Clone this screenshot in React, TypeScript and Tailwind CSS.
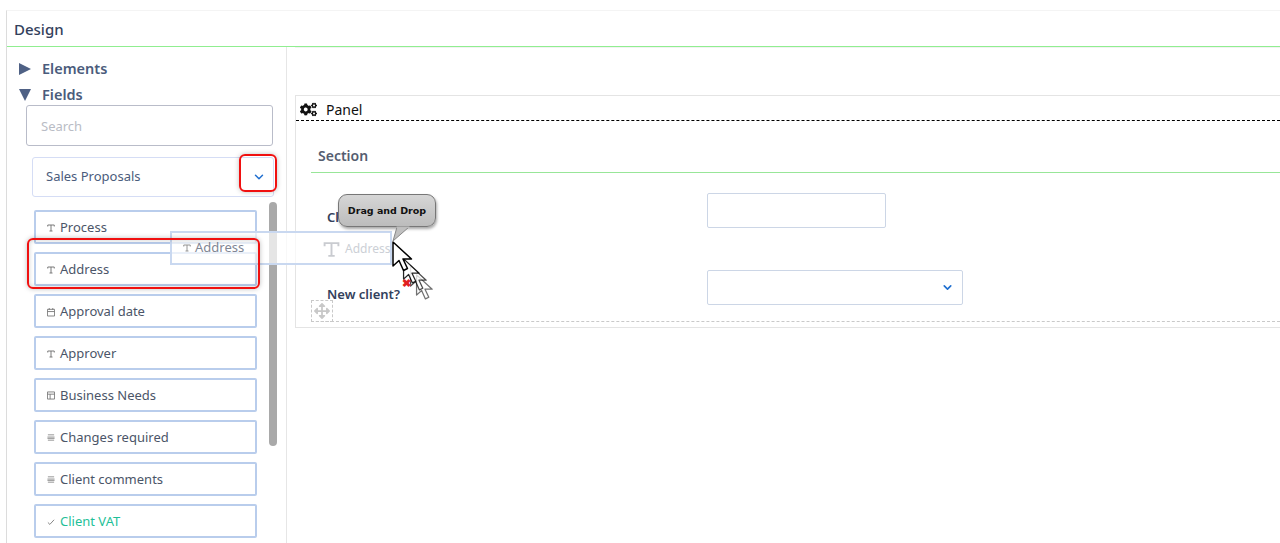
import React from "react";
import { FaCogs, FaArrowsAlt } from "react-icons/fa";
import { ChevronDown } from "lucide-react";

const TIcon = ({ size = 8, color = "#6b6b6b" }: { size?: number; color?: string }) => (
  <svg width={size} height={size} viewBox="0 0 16 16" className="shrink-0">
    <path d="M1.5 5V2h13v3M8 2v12M5 14h6" fill="none" stroke={color} strokeWidth="1.8" />
  </svg>
);
const CalIcon = () => (
  <svg width="8" height="10" viewBox="0 0 9 10" className="shrink-0">
    <path d="M.5 2h8v7.5h-8zM.5 4.5h8M2.5.5v2M6.5.5v2" fill="none" stroke="#777" strokeWidth="1" />
  </svg>
);
const TableIcon = () => (
  <svg width="8" height="9" viewBox="0 0 9 9" className="shrink-0">
    <path d="M.5.5h8v8h-8zM.5 3h8M3.5 3v5.5" fill="none" stroke="#777" strokeWidth="1" />
  </svg>
);
const LinesIcon = () => (
  <svg width="8" height="7" viewBox="0 0 9 7" className="shrink-0">
    <path d="M1 .5h7M.5 3h8M.5 4.5h8M1 6.5h7" fill="none" stroke="#888" strokeWidth="1" />
  </svg>
);
const CheckIcon = () => (
  <svg width="8" height="8" viewBox="0 0 9 8" className="shrink-0">
    <path d="M1 4.5l2.2 2.2L8 1.5" fill="none" stroke="#777" strokeWidth="1" />
  </svg>
);

const fields: { label: string; icon: React.ReactNode; green?: boolean }[] = [
  { label: "Process", icon: <TIcon /> },
  { label: "Address", icon: <TIcon /> },
  { label: "Approval date", icon: <CalIcon /> },
  { label: "Approver", icon: <TIcon /> },
  { label: "Business Needs", icon: <TableIcon /> },
  { label: "Changes required", icon: <LinesIcon /> },
  { label: "Client comments", icon: <LinesIcon /> },
  { label: "Client VAT", icon: <CheckIcon />, green: true },
];

const Cursor = ({ opacity = 1, className = "" }: { opacity?: number; className?: string }) => (
  <svg width="22" height="32" viewBox="0 0 22 32" className={className} style={{ opacity }}>
    <path d="M1 1v24l6-5.5 4.5 10 4-2-4.5-9.5h8.5z" fill="#fff" stroke="#000" strokeWidth="1.5" strokeLinejoin="round" />
  </svg>
);

export default function App() {
  return (
    <div className="relative h-[543px] w-[1280px] overflow-hidden bg-white text-[#3d4a63]" style={{ fontFamily: '"Noto Sans","Open Sans",sans-serif' }}>
      <div className="ml-[6px] mt-[10px] flex h-[533px] flex-col border-l border-t border-l-[#dcdcdc] border-t-[#f4f4f4]">
        <div className="flex h-[36px] shrink-0 items-center border-b border-b-[#90ee90] pl-[7px] pt-[2px] text-[15px] font-medium text-[#33415c]">
          <span>Design</span>
        </div>
        <div className="flex min-h-0 flex-1">
          {/* Sidebar */}
          <div className="w-[280px] shrink-0 border-r border-r-[#e6e6e6] pl-[12px]">
            <div className="mt-[9px] flex h-[26px] items-center gap-[10px] text-[14.5px] font-semibold text-[#4b5c7c]">
              <svg width="13" height="12" viewBox="0 0 13 12"><path d="M0 0l12 6-12 6z" fill="#4f6185" /></svg>
              <span>Elements</span>
            </div>
            <div className="flex h-[26px] items-center gap-[10px] text-[14.5px] font-semibold text-[#4b5c7c]">
              <svg width="13" height="12" viewBox="0 0 13 12"><path d="M0 0h12L6 12z" fill="#4f6185" /></svg>
              <span>Fields</span>
            </div>
            <div className="ml-[7px] mt-[-3px] flex h-[41px] w-[247px] items-center rounded-[3px] border border-[#b9bcc9] pl-[14px] pt-[2px] text-[13px] text-[#b9bcc5]">
              Search
            </div>
            <div className="ml-[13px] mt-[11px] flex h-[40px] w-[242px] items-center justify-between rounded-[3px] border border-[#d5ddf5] pl-[13px] pr-[7px] text-[13px] text-[#4b5c7c]">
              <span>Sales Proposals</span>
              <ChevronDown size={14} strokeWidth={2.5} color="#1f6fd0" />
            </div>
            <div className="mt-[5px] flex h-[346px] gap-[12px] overflow-hidden">
              <div className="ml-[15px] mt-[8px] flex w-[223px] shrink-0 flex-col gap-[8px]">
                {fields.map((f) => (
                  <div key={f.label} className="flex h-[34px] shrink-0 items-center gap-[5px] rounded-[2px] border-2 border-[#b9cdec] pl-[11px] pt-[1px] text-[13px]">
                    {f.icon}
                    <span className={f.green ? "text-[#1fbf98]" : "text-[#4b5568]"}>{f.label}</span>
                  </div>
                ))}
              </div>
              <div className="h-[244px] w-[8px] shrink-0 rounded-[4px] bg-[#a9a9a9]" />
            </div>
          </div>
          {/* Canvas */}
          <div className="min-w-0 flex-1 pl-[8px]">
            <div className="h-[10px] border-t border-t-[#f2f2f2]" />
            <div className="mt-[38px] border border-r-0 border-[#e4e4e4]">
              <div className="flex h-[25px] items-center gap-[9px] border-b border-dashed border-b-black pl-[4px] pt-[2px] text-[14px] text-[#111]">
                <FaCogs size={17} color="#111" />
                <span>Panel</span>
              </div>
              <div className="pl-[15px]">
                <div className="flex h-[52px] items-end border-b border-b-[#98e698] pb-[6px] pl-[7px] text-[14px] font-semibold text-[#555d70]">
                  Section
                </div>
                <div className="relative h-[149px] border-b border-dashed border-b-[#c9c9c9]">
                  <div className="flex h-[97px] items-start">
                    <div className="mt-[35px] w-[396px] pl-[16px] text-[13px] font-semibold text-[#33415c]">Client</div>
                    <div className="mt-[20px] h-[35px] w-[179px] rounded-[2px] border border-[#ccd6e6]" />
                  </div>
                  <div className="flex items-start">
                    <div className="mt-[15px] w-[396px] pl-[16px] text-[13px] font-semibold text-[#33415c]">New client?</div>
                    <div className="flex h-[35px] w-[256px] items-center justify-end rounded-[2px] border border-[#ccd6e6] pr-[8px]">
                      <ChevronDown size={13} strokeWidth={3} color="#1f6fd0" />
                    </div>
                  </div>
                  <div className="absolute bottom-[-1px] left-0 flex h-[22px] w-[22px] items-center justify-center border border-dashed border-[#c9c9c9]">
                    <FaArrowsAlt size={16} color="#c8c8c8" />
                  </div>
                </div>
                <div className="h-[5px]" />
              </div>
            </div>
          </div>
        </div>
      </div>

      {/* Drag ghost */}
      <div className="absolute left-[170px] top-[231px] flex h-[34px] w-[222px] items-center gap-[4px] border-2 border-[#c9d8f0] bg-white/70 pl-[11px] text-[13px] text-[#7f8694]">
        <TIcon color="#8a8a8a" />
        <span>Address</span>
      </div>
      <div className="absolute left-[323px] top-[240px] flex items-center gap-[5px] text-[12px] text-[#ccd0d6]">
        <TIcon size={17} color="#c9cbd0" />
        <span>Address</span>
      </div>

      {/* Red highlights */}
      <div className="absolute left-[239px] top-[154px] h-[38px] w-[38px] rounded-[6px] border-2 border-[#f01010] shadow-[0_0_5px_rgba(0,0,0,0.25)]" />
      <div className="absolute left-[27px] top-[238px] h-[51px] w-[233px] rounded-[6px] border-2 border-[#f01010] shadow-[0_0_5px_rgba(0,0,0,0.25),inset_0_0_5px_rgba(0,0,0,0.2)]" />

      {/* Cursors */}
      <Cursor opacity={0.55} className="absolute left-[414px] top-[274px] h-[27px]" />
      <Cursor opacity={0.7} className="absolute left-[408px] top-[265px] h-[27px]" />
      <Cursor opacity={0.85} className="absolute left-[401px] top-[258px] h-[27px]" />
      <span className="absolute left-[402px] top-[276px] text-[11px] font-bold leading-[14px] text-[#e02020]">✖</span>
      <Cursor className="absolute left-[392px] top-[241px] h-[32px]" />

      {/* Tooltip */}
      <div className="absolute left-[338px] top-[194px] flex h-[33px] w-[98px] items-center justify-center rounded-[9px] border border-[#777] bg-linear-to-b from-[#d6d6d6] to-[#bcbcbc] pt-[1px] text-[9.5px] font-bold text-[#111] shadow-[1px_2px_3px_rgba(0,0,0,0.35)]" style={{ fontFamily: '"DejaVu Sans",sans-serif' }}>
        Drag and Drop
      </div>
      <svg className="absolute left-[392px] top-[226px]" width="18" height="16" viewBox="0 0 18 16">
        <path d="M1 15L5 1h12z" fill="#c0c0c0" stroke="#888" strokeWidth="1" />
        <path d="M4.5 0.5h13V2h-13z" fill="#bdbdbd" />
      </svg>
    </div>
  );
}
